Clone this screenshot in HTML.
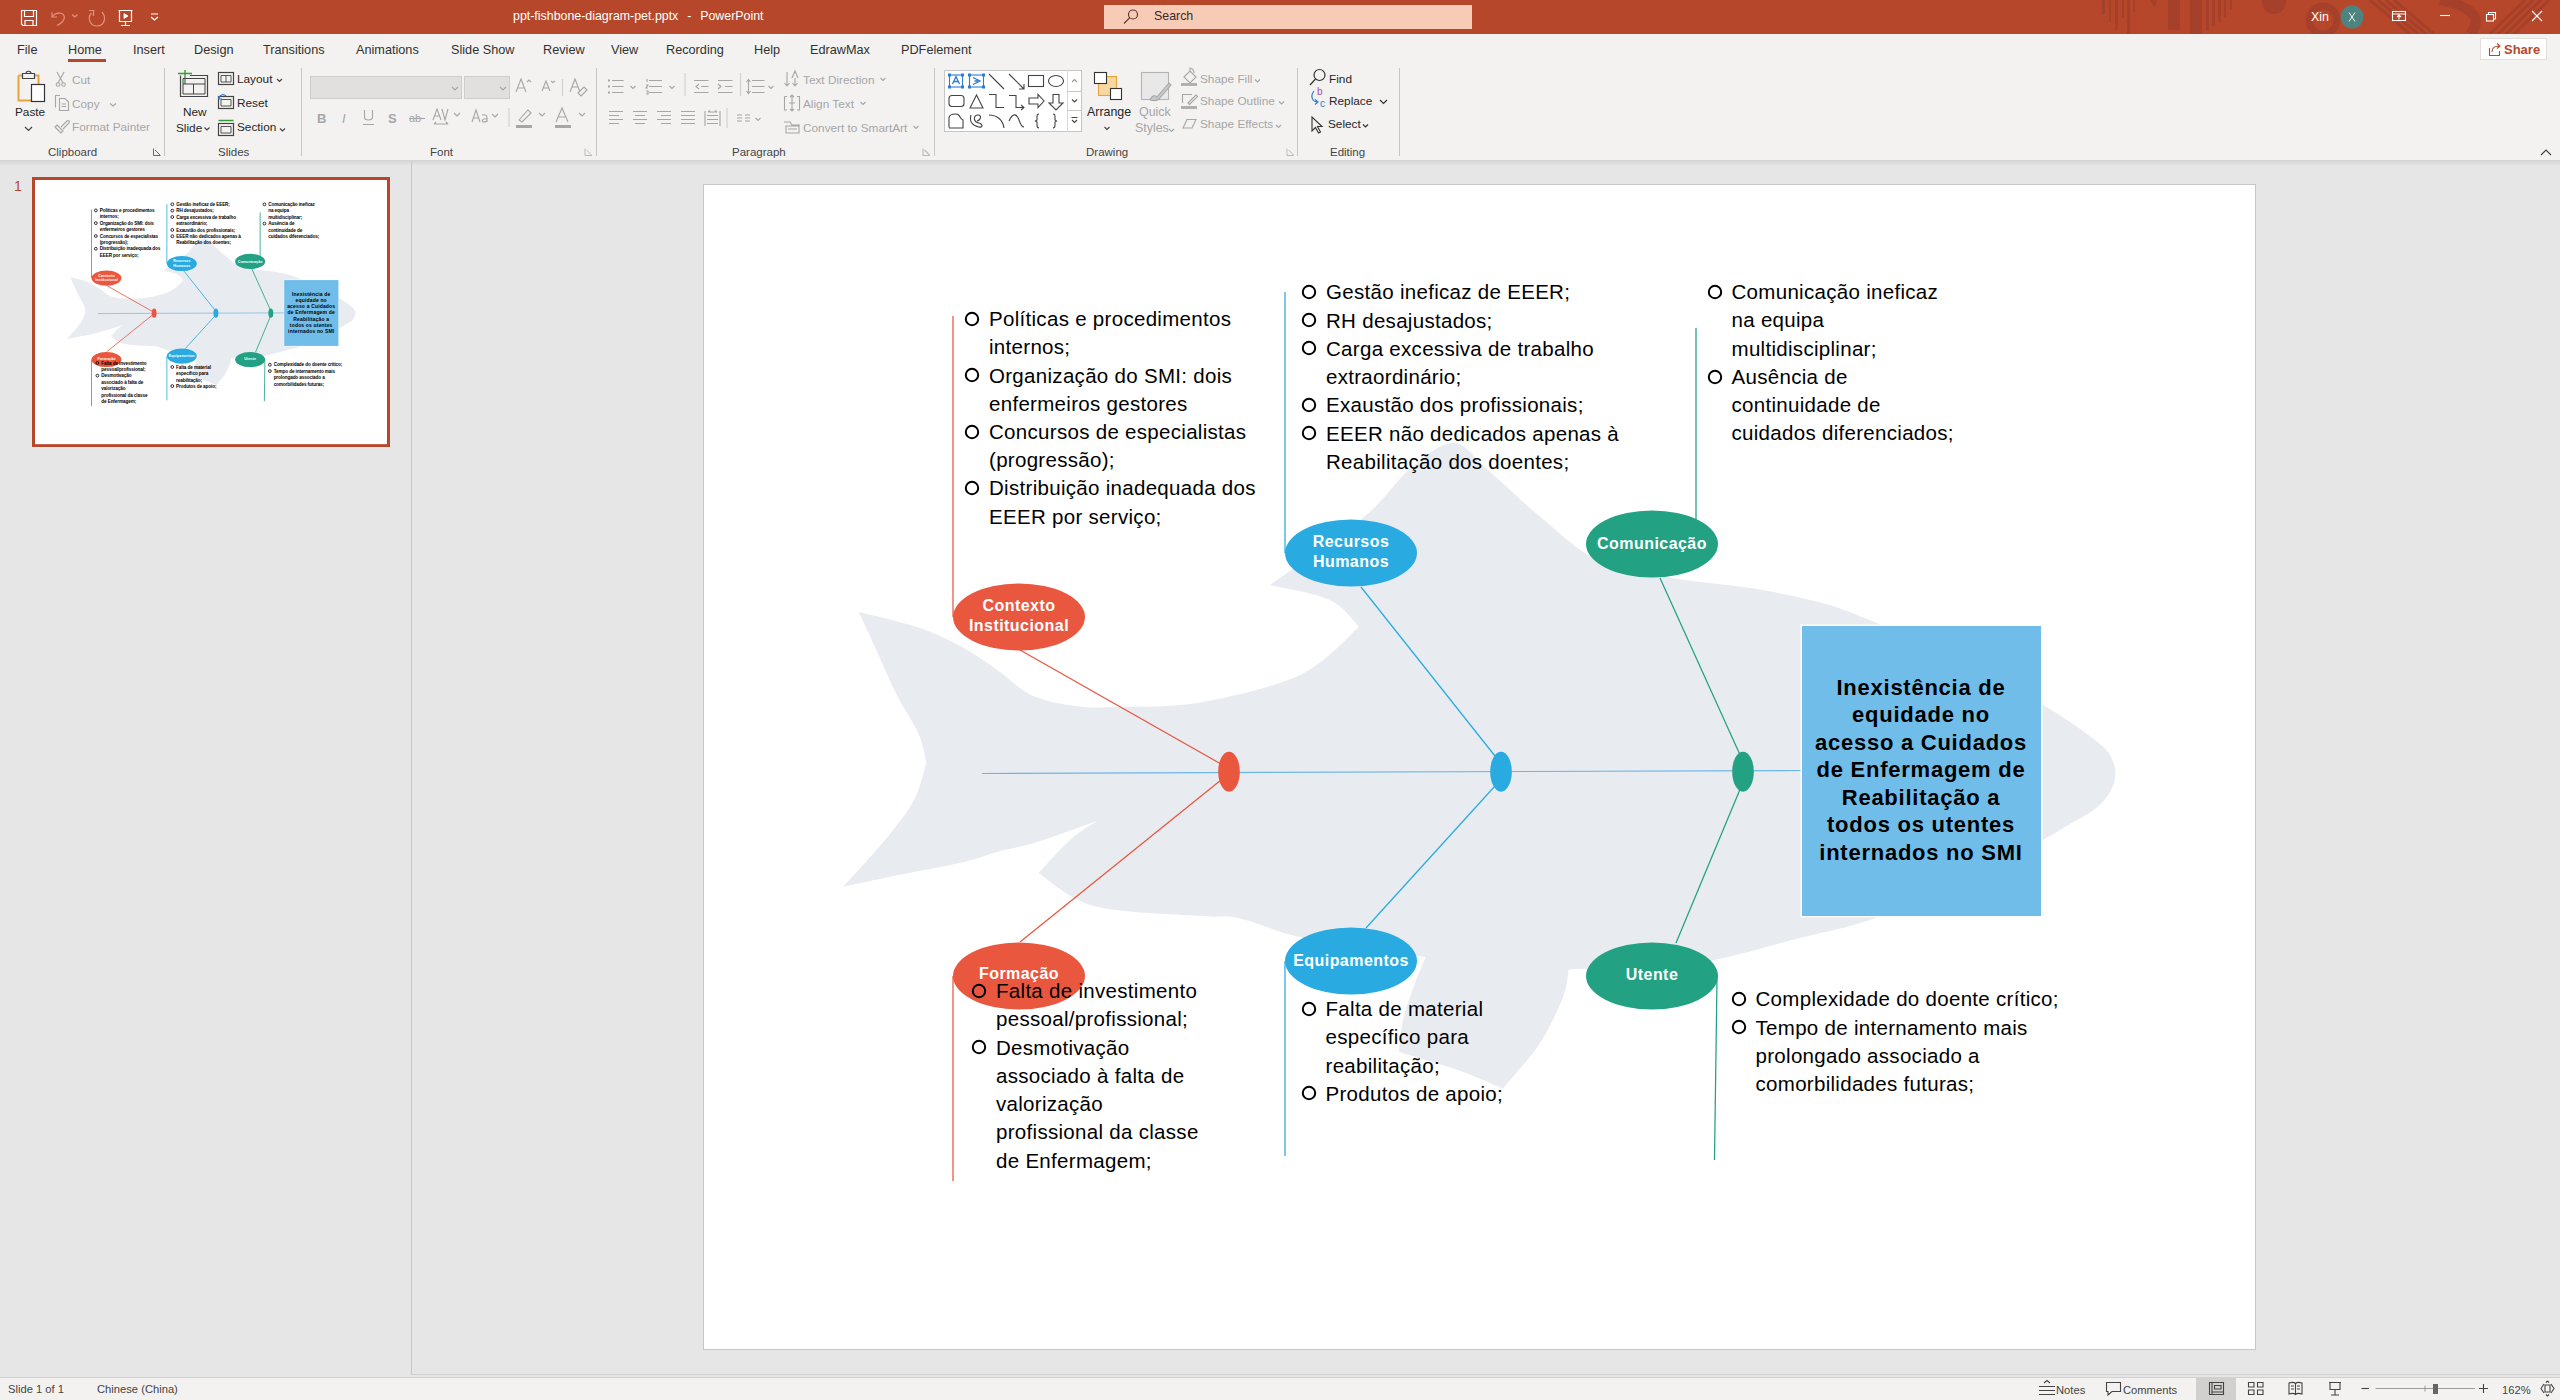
<!DOCTYPE html>
<html><head><meta charset="utf-8"><title>PowerPoint</title>
<style>
*{margin:0;padding:0;box-sizing:border-box}
html,body{width:2560px;height:1400px;overflow:hidden;background:#e6e6e6;font-family:"Liberation Sans",sans-serif;color:#262626}
.abs{position:absolute}
#titlebar{position:absolute;left:0;top:0;width:2560px;height:34px;background:#b7472a;overflow:hidden}
#tabs{position:absolute;left:0;top:34px;width:2560px;height:30px;background:#f3f2f1}
#ribbon{position:absolute;left:0;top:64px;width:2560px;height:96px;background:#f3f2f1}
#ribshadow{position:absolute;left:0;top:160px;width:2560px;height:6px;background:linear-gradient(#d4d4d4,#e6e6e6)}
.tab{position:absolute;top:41px;font-size:12.7px;color:#323130;white-space:nowrap;line-height:16px}
.t12{position:absolute;font-size:11.8px;color:#262626;white-space:nowrap;line-height:14px}
.dis{color:#a6a6a6}
.glab{position:absolute;top:145px;font-size:11.5px;color:#444;white-space:nowrap;line-height:14px}
.sep{position:absolute;top:68px;width:1px;height:88px;background:#c8c6c4}
.sep2{position:absolute;width:1px;background:#d0d0d0}
svg{position:absolute;overflow:visible}
.st{font-size:11.2px;color:#444;white-space:nowrap;position:absolute;line-height:14px}
.sl{position:absolute;white-space:nowrap;font-family:"Liberation Sans",sans-serif}
.slide{position:absolute;width:1551px;height:1164px;background:#fff;overflow:hidden}
</style></head><body>
<div id="titlebar">
<svg width="2560" height="34" style="left:0;top:0">
 <g fill="#a3402a" opacity="0.85">
  <rect x="2102" y="0" width="3" height="14"/><rect x="2109" y="0" width="2" height="22"/><rect x="2115" y="0" width="3" height="30"/><rect x="2122" y="0" width="2" height="18"/><rect x="2127" y="0" width="3" height="34"/><rect x="2133" y="0" width="2" height="12"/>
  <polygon points="2150,0 2157,0 2155,8"/>
  <rect x="2168" y="0" width="12" height="30"/><rect x="2190" y="0" width="12" height="34"/><rect x="2206" y="0" width="3" height="30"/><rect x="2212" y="0" width="3" height="26"/><rect x="2218" y="0" width="3" height="22"/><rect x="2224" y="0" width="2" height="18"/><rect x="2230" y="0" width="2" height="10"/>
  <circle cx="2274" cy="2" r="12"/>
 </g>
 <g fill="none" stroke="#a3402a" opacity="0.85">
  <circle cx="2323" cy="20" r="14" stroke-width="7"/>
  <path d="M2370 0 L2410 34 M2378 0 L2418 34 M2386 0 L2426 34 M2394 0 L2434 34" stroke-width="3"/>
  <path d="M2440 0 Q2490 10 2470 34" stroke-width="10"/>
  <path d="M2490 34 L2525 0 M2498 34 L2533 0 M2506 34 L2541 0 M2514 34 L2549 0" stroke-width="3"/>
 </g>
 <!-- save -->
 <g fill="none" stroke="#fff" stroke-width="1.2">
  <path d="M21.5 10.5 H36.5 V25.5 H23 L21.5 24 Z"/>
  <path d="M24.5 10.5 V16.5 H33.5 V10.5"/>
  <path d="M25 25.5 V20.5 H33 V25.5"/>
 </g>
 <!-- undo -->
 <g fill="none" stroke="#e0937f" stroke-width="1.2">
  <path d="M52 12 V17 H57"/><path d="M52 17 C56 11 66 12 64 19 C63 22 60 24 57 25.5"/>
  <path d="M72 14.5 L74.8 17 L77.5 14.5"/>
  <path d="M89 10.5 H94.5 M93.5 10.5 V16"/><path d="M91.5 13 C87 18 90 26 97 26 C104 26 107 18 102 12"/>
 </g>
 <!-- present -->
 <g fill="none" stroke="#fff" stroke-width="1.2">
  <path d="M118.5 10.5 H132.5 M119.5 10.5 V21.5 H131.5 V10.5 M125.5 21.5 V25.5 M121 25.5 H130"/>
  <path d="M124 13.5 L128 16 L124 18.5 Z" fill="#fff" stroke-width="0.8"/>
  <path d="M151 14 H158 M151 17 L154.5 20 L158 17"/>
 </g>
 <rect x="1104" y="5" width="368" height="24" fill="#f8cbb7"/>
 <g fill="none" stroke="#5a3a30" stroke-width="1.2"><circle cx="1133" cy="14.5" r="4.5"/><path d="M1129.8 17.7 L1124 23.5"/></g>
 <!-- right -->
 <circle cx="2352" cy="17" r="11.5" fill="#4e8380"/>
 <g fill="none" stroke="#fff" stroke-width="1.1">
  <path d="M2349 12.5 L2355 21.5 M2355 12.5 L2349 21.5" stroke-width="0.9"/>
  <rect x="2392.5" y="11.5" width="13" height="9"/><path d="M2392.5 14 H2405.5 M2399 19.5 V15.5 M2397 17 L2399 15 L2401 17"/>
  <path d="M2440 15.5 H2450"/>
  <rect x="2486.5" y="14.5" width="7" height="6.5"/><path d="M2488.5 14.5 V12.5 H2495.5 V19 H2493.5"/>
  <path d="M2532 11 L2542 21 M2542 11 L2532 21"/>
 </g>
</svg>
<div class="abs" style="left:513px;top:9px;font-size:12.4px;color:#fff;white-space:nowrap;line-height:15px;word-spacing:1px">ppt-fishbone-diagram-pet.pptx&nbsp; - &nbsp;PowerPoint</div>
<div class="abs" style="left:1154px;top:9px;font-size:12.4px;color:#3b2a25;line-height:15px">Search</div>
<div class="abs" style="left:2311px;top:10px;font-size:12.4px;color:#fff;line-height:15px">Xin</div>
</div>
<div id="tabs">
<div class="tab" style="left:17px;top:8px">File</div>
<div class="tab" style="left:68px;top:8px">Home</div>
<div class="abs" style="left:68px;top:25px;width:38px;height:3px;background:#b7472a"></div>
<div class="tab" style="left:133px;top:8px">Insert</div>
<div class="tab" style="left:194px;top:8px">Design</div>
<div class="tab" style="left:263px;top:8px">Transitions</div>
<div class="tab" style="left:356px;top:8px">Animations</div>
<div class="tab" style="left:451px;top:8px">Slide Show</div>
<div class="tab" style="left:543px;top:8px">Review</div>
<div class="tab" style="left:611px;top:8px">View</div>
<div class="tab" style="left:666px;top:8px">Recording</div>
<div class="tab" style="left:754px;top:8px">Help</div>
<div class="tab" style="left:810px;top:8px">EdrawMax</div>
<div class="tab" style="left:901px;top:8px">PDFelement</div>
<div class="abs" style="left:2480px;top:4px;width:67px;height:22px;background:#fff;border:1px solid #e1dfdd"></div>
<svg width="20" height="20" style="left:2486px;top:5px"><g fill="none" stroke="#b7472a" stroke-width="1.1"><path d="M3.5 9 V16.5 H13.5 V12"/><path d="M6 13 C6 9 9 7 13 7 M11 4.5 L14 7 L11 9.5"/></g></svg>
<div class="abs" style="left:2504px;top:7.5px;font-size:13px;font-weight:600;color:#b7472a;line-height:16px">Share</div>
</div>
<div id="ribbon"></div>
<div id="ribshadow"></div>
<!-- separators -->
<div class="sep" style="left:164px"></div>
<div class="sep" style="left:301px"></div>
<div class="sep" style="left:596px"></div>
<div class="sep" style="left:934px"></div>
<div class="sep" style="left:1297px"></div>
<div class="sep" style="left:1399px"></div>
<!-- Clipboard -->
<svg width="300" height="100" style="left:0;top:60px">
 <g fill="none" stroke-width="1.2">
  <path d="M18.5 15.5 H22 M34 15.5 H38.5 V24" stroke="#e8a33d" stroke-width="2"/>
  <path d="M18.5 15.5 V40.5 H31" stroke="#e8a33d" stroke-width="2"/>
  <path d="M22.5 13.5 H34.5 V18.5 H22.5 Z M26 13.5 C26 10.5 31 10.5 31 13.5" stroke="#444"/>
  <rect x="31.5" y="24.5" width="13" height="17" fill="#fff" stroke="#333"/>
  <path d="M25 67 L28.5 70.5 L32 67" stroke="#444"/>
 </g>
 <g fill="none" stroke="#a6a6a6" stroke-width="1.1">
  <path d="M57 12 L63 23 M64 12 L58 23"/><circle cx="58" cy="24.5" r="1.8"/><circle cx="63.5" cy="24.5" r="1.8"/>
  <path d="M55.5 47.5 V35.5 H60 M59.5 49.5 V38.5 H65 L68.5 42 V50.5 H59.5 Z M61.5 44 H66 M61.5 46.5 H66"/>
  <path d="M110 43.5 L113 46 L116 43.5"/>
  <path d="M55 67 L60 72 M57 65 L63 71 L61 73 L55 67 Z M61 67 L67 61 C69 60 70 61 69 63 L63 69"/>
 </g>
 <g fill="none" stroke="#444" stroke-width="1.2">
  <path d="M178 13.5 H192 M185 10 V24" stroke="#3a9a3a" stroke-width="1.4"/>
  <path d="M180.5 15.5 V36.5 H207.5 V15.5 H190"/><path d="M183 18.5 H205 V34 H183 Z M193.5 24 V34 M183 24 H205" stroke-width="1"/>
  <path d="M204.5 67.5 L207 70 L209.5 67.5"/>
  <rect x="218.5" y="12.5" width="15" height="12"/><path d="M221 15.5 H231 V22 H221 Z M226 15.5 V22" stroke-width="0.9"/>
  <path d="M277 19 L279.5 21.5 L282 19"/>
  <rect x="218.5" y="36.5" width="15" height="12"/><path d="M221 39.5 H231 V46 H221 Z" stroke-width="0.9"/>
  <path d="M219 38 C220 34 224 34 226 36 M219 36 V39 H222" stroke="#2b7cd3"/>
  <path d="M218.5 60.5 H233.5" stroke="#3a9a3a" stroke-width="1.5"/><rect x="218.5" y="63.5" width="15" height="12"/><path d="M221 66.5 H231 V73 H221 Z" stroke-width="0.9"/>
  <path d="M280 68.5 L282.5 71 L285 68.5"/>
  <path d="M153.5 88.5 V95.5 H160.5 M155 90 L160 95" stroke="#666" stroke-width="1"/>
 </g>
</svg>
<div class="t12" style="left:15px;top:105px;font-size:11.8px">Paste</div>
<div class="t12 dis" style="left:72px;top:73px">Cut</div>
<div class="t12 dis" style="left:72px;top:97px">Copy</div>
<div class="t12 dis" style="left:72px;top:120px">Format Painter</div>
<div class="glab" style="left:48px">Clipboard</div>
<div class="t12" style="left:183px;top:105px;font-size:11.8px">New</div>
<div class="t12" style="left:176px;top:121px;font-size:11.8px">Slide</div>
<div class="t12" style="left:237px;top:72px">Layout</div>
<div class="t12" style="left:237px;top:96px">Reset</div>
<div class="t12" style="left:237px;top:120px">Section</div>
<div class="glab" style="left:218px">Slides</div>
<!-- Font -->
<div class="abs" style="left:310px;top:76px;width:152px;height:23px;background:#e1e0df;border:1px solid #cfcdcb"></div>
<div class="abs" style="left:464px;top:76px;width:46px;height:23px;background:#e1e0df;border:1px solid #cfcdcb"></div>
<svg width="700" height="100" style="left:300px;top:60px">
 <g fill="none" stroke="#a6a6a6" stroke-width="1.1">
  <path d="M152 27 L155 30 L158 27 M200 27 L203 30 L206 27"/>
  <path d="M216 32 L221 19 L226 32 M218 28 H224 M227 22 L229 20 L231 22"/>
  <path d="M242 31 L246 21 L250 31 M243.5 28 H248.5 M251 21 L253 22.5 L255 21"/>
  <path d="M262.5 19 V36" stroke="#d0d0d0"/>
  <path d="M270 32 L275 19 L280 32 M272 27 H278 M278 33 L284 27 L287 30 L281 36 Z"/>
  <path d="M154 53 L157 56 L160 53 M192 54 L195 57 L198 54 M239 53 L242 56 L245 53 M279 53 L282 56 L285 53"/>
  <path d="M209 48 V67" stroke="#d0d0d0"/>
  <path d="M64.5 50 V57 C64.5 61 72.5 61 72.5 57 V50 M63 64.5 H74"/>
  <path d="M109 58.5 H125"/>
  <path d="M133 60 L137 49 L141 60 M134.5 56 H139.5 M142 49 L145 60 L148 49 M134 64 H148 M134 64 L136 62 M148 64 L146 62"/>
  <path d="M172 62 L176 50 L180 62 M173.5 58 H178.5 M182 55 C186 54 187 56 187 58 V62 M187 59 C182 58 181 62 184 62 C186 62 187 61 187 60"/>
  <path d="M219 60 L228 50 L231 53 L222 62 Z"/>
  <path d="M256 62 L262 48 L268 62 M258 57 H266"/>
 </g>
 <g fill="#a6a6a6">
  <rect x="216" y="65" width="16" height="3"/><rect x="255" y="65" width="16" height="3"/>
 </g>
 <g fill="#a6a6a6" font-family="Liberation Sans" >
  <text x="17" y="63" font-size="13" font-weight="700">B</text>
  <text x="42" y="63" font-size="13" font-style="italic">I</text>
  <text x="88" y="63" font-size="13" font-weight="700">S</text>
  <text x="109" y="62" font-size="11">ab</text>
 </g>
 <path d="M285 88.5 V95.5 H292 M286.5 90 L291.5 95" stroke="#bbb" fill="none"/>
</svg>
<div class="glab" style="left:430px">Font</div>
<!-- Paragraph -->
<svg width="340" height="100" style="left:595px;top:60px">
 <g fill="none" stroke="#a6a6a6" stroke-width="1.1">
  <path d="M17 20.5 H28.5 M17 26.5 H28.5 M17 32.5 H28.5"/>
  <rect x="13" y="19.5" width="2" height="2" fill="#a6a6a6" stroke="none"/><rect x="13" y="25.5" width="2" height="2" fill="#a6a6a6" stroke="none"/><rect x="13" y="31.5" width="2" height="2" fill="#a6a6a6" stroke="none"/>
  <path d="M35.5 26 L38 28.5 L40.5 26 M74.5 26 L77 28.5 L79.5 26 M173.5 26 L176 28.5 L178.5 26 M160.5 58 L163 60.5 L165.5 58"/>
  <path d="M54 20.5 H67 M54 26.5 H67 M54 32.5 H67 M52 19 V22 M51 25 H53 L51 28 H53 M51 31 H53 V34 H51"/>
  <path d="M90 30.5" /><path d="M685 0"/>
  <path d="M99 20.5 H113.5 M106 26.5 H113.5 M99 32.5 H113.5 M104 24 L101 26.5 L104 29"/>
  <path d="M123 20.5 H137.5 M130 26.5 H137.5 M123 32.5 H137.5 M123 24 L126 26.5 L123 29"/>
  <path d="M90 13 V36 M145.5 13 V36" stroke="#d0d0d0"/>
  <path d="M157 20.5 H169.5 M157 26.5 H169.5 M157 32.5 H169.5 M153.5 20 V33 M151.5 22 L153.5 19.5 L155.5 22 M151.5 31 L153.5 33.5 L155.5 31"/>
  <path d="M192 12 V26 M189.5 23 L192 26 L194.5 23 M200 18 V26 M197.5 23 L200 26 L202.5 23 M197 18 L200 11 L203 18"/>
  <path d="M189.5 36.5 H192 M189.5 36.5 V50 H192 M202 36.5 H204.5 V50 H202 M197 35 V51 M195 37 L197 35 L199 37 M195 49 L197 51 L199 49 M194 43 H200"/>
  <path d="M189 62 L195 62 L197 65 H205 M191 66 H204 V73 H191 Z M193 69 H202" />
  <path d="M14 51.5 H28 M14 55.5 H24 M14 59.5 H28 M14 63.5 H24"/>
  <path d="M38 51.5 H52 M40 55.5 H50 M38 59.5 H52 M40 63.5 H50"/>
  <path d="M62 51.5 H76 M66 55.5 H76 M62 59.5 H76 M66 63.5 H76"/>
  <path d="M86 51.5 H100 M86 55.5 H100 M86 59.5 H100 M86 63.5 H100"/>
  <path d="M110 51 V66 M125 51 V66 M112 55.5 H123 M112 59.5 H123 M112 63.5 H123 M113 52 H122 M113 52 L115 50.5 M122 52 L120 50.5"/>
  <path d="M132 48 V68" stroke="#d0d0d0"/>
  <path d="M142 55 H147 M142 58 H147 M142 61 H147 M150 55 H155 M150 58 H155 M150 61 H155"/>
  <path d="M328 88.5 V95.5 H335 M329.5 90 L334.5 95" stroke="#bbb"/>
 </g>
</svg>
<div class="t12 dis" style="left:803px;top:73px">Text Direction</div>
<div class="t12 dis" style="left:803px;top:97px">Align Text</div>
<div class="t12 dis" style="left:803px;top:121px">Convert to SmartArt</div>
<svg width="100" height="100" style="left:870px;top:60px"><g fill="none" stroke="#a6a6a6" stroke-width="1.1"><path d="M10.5 18 L13 20.5 L15.5 18 M-9.5 42 L-7 44.5 L-4.5 42 M43.5 66 L46 68.5 L48.5 66"/></g></svg>
<div class="glab" style="left:732px">Paragraph</div>
<!-- Drawing -->
<div class="abs" style="left:944px;top:70px;width:138px;height:62px;background:#fff;border:1px solid #c6c6c6"></div>
<div class="abs" style="left:1067px;top:70px;width:1px;height:62px;background:#d6d6d6"></div>
<div class="abs" style="left:1067px;top:91px;width:15px;height:1px;background:#c6c6c6"></div>
<div class="abs" style="left:1067px;top:110px;width:15px;height:1px;background:#c6c6c6"></div>
<svg width="500" height="100" style="left:935px;top:60px">
 <g fill="none" stroke="#444" stroke-width="1.1">
  <rect x="14.5" y="15" width="13" height="12" stroke="#2b7cd3"/>
  <path d="M17.5 24 L21 16.5 L24.5 24 M18.5 21.5 H23.5" stroke="#2b7cd3" stroke-width="1.3"/>
  <rect x="34.5" y="15" width="14" height="12" stroke="#2b7cd3"/>
  <path d="M38 17.5 L45 21 L38 24.5 M39.5 21 H43" stroke="#2b7cd3" stroke-width="1.3"/>
  <path d="M54 14 L69 29"/>
  <path d="M74 14 L89 29 M84 29 H89 V24"/>
  <rect x="93.5" y="15.5" width="15" height="11"/>
  <ellipse cx="121" cy="21" rx="7.5" ry="5.5"/>
  <rect x="14" y="35.5" width="15" height="11" rx="3"/>
  <path d="M35 48 L41.5 35 L48 48 Z"/>
  <path d="M54 34.5 H61 V47.5 H69"/>
  <path d="M74 35.5 H81 V47.5 H89 M86 45 L89 47.5 L86 50"/>
  <path d="M94 38 H103 V34.5 L109 41 L103 47.5 V44 H94 Z"/>
  <path d="M118 34.5 H124 V43 H128 L121 50 L114 43 H118 Z"/>
  <path d="M14 67.5 V58 C14 55 17 54 21 54 C26 54 24 59 28 60 V68 H14"/>
  <path d="M36 55 C34 62 38 66 44 67 C48 68 48 64 44 63 C38 62 38 55 43 55 C47 55 46 60 42 61"/>
  <path d="M54 55 C62 55 68 60 69 68"/>
  <path d="M74 61 C78 52 82 54 84 60 C86 66 88 67 89 67"/>
  <path d="M104 54 C102 54 102 55 102 58 V60 L100.5 61 L102 62 V65 C102 67 102 68 104 68"/>
  <path d="M118 54 C120 54 120 55 120 58 V60 L121.5 61 L120 62 V65 C120 67 120 68 118 68"/>
  <path d="M137 22 L139.5 19.5 L142 22" stroke="#999"/>
  <path d="M137 39.5 L139.5 42 L142 39.5" stroke="#444"/>
  <path d="M136.5 57.5 H142.5 M137 60 L139.5 62.5 L142 60"/>
 </g>
 <g stroke="none" fill="#2b7cd3">
  <rect x="13" y="13.5" width="3" height="3"/><rect x="26" y="13.5" width="3" height="3"/><rect x="13" y="25.5" width="3" height="3"/><rect x="26" y="25.5" width="3" height="3"/>
  <rect x="33" y="13.5" width="3" height="3"/><rect x="47" y="13.5" width="3" height="3"/><rect x="33" y="25.5" width="3" height="3"/><rect x="47" y="25.5" width="3" height="3"/>
 </g>
 <g stroke-width="1.1">
  <rect x="163.5" y="16.5" width="18" height="19" fill="#f8d7a0" stroke="#e8a33d"/>
  <rect x="159.5" y="12.5" width="12" height="11" fill="#fff" stroke="#333"/>
  <rect x="175.5" y="28.5" width="11" height="11" fill="#fff" stroke="#333"/>
  <path d="M169.5 67 L172 69.5 L174.5 67" fill="none" stroke="#444"/>
  <rect x="206.5" y="12.5" width="27" height="27" fill="#e8e8e8" stroke="#b4b4b4"/>
  <path d="M215 40 C217 35 220 35 222 37 L234 23 L236 25 L224 39 C222 41 219 41 215 40" fill="#c8c8c8" stroke="#a6a6a6"/>
  <path d="M234 69 L236.5 71.5 L239 69" fill="none" stroke="#a6a6a6"/>
 </g>
 <path d="M352 88.5 V95.5 H359 M353.5 90 L358.5 95" stroke="#bbb" fill="none"/>
</svg>
<div class="t12" style="left:1087px;top:105px;font-size:12.4px">Arrange</div>
<div class="t12 dis" style="left:1139px;top:105px;font-size:12.4px">Quick</div>
<div class="t12 dis" style="left:1135px;top:121px;font-size:12.4px">Styles</div>
<svg width="120" height="80" style="left:1175px;top:60px">
 <g fill="none" stroke="#a6a6a6" stroke-width="1.1">
  <path d="M9 17 L15 11 L21 17 L15 23 Z M15 11 V8 C17 8 19 10 19 13"/>
  <path d="M7.5 43 V34.5 H17 M13 43 L21 35 L22.5 36.5 L14.5 44.5 Z"/>
  <path d="M8 68 L12 59.5 H21 L17 68 Z M12 59.5 L10 64"/>
  <path d="M80 19.5 L82.5 22 L85 19.5 M104 41.5 L106.5 44 L109 41.5 M101 65 L103.5 67.5 L106 65"/>
 </g>
 <rect x="6" y="23" width="16" height="3" fill="#b0b0b0"/>
 <rect x="6" y="46" width="16" height="3" fill="#b0b0b0"/>
</svg>
<div class="t12 dis" style="left:1200px;top:72px">Shape Fill</div>
<div class="t12 dis" style="left:1200px;top:94px">Shape Outline</div>
<div class="t12 dis" style="left:1200px;top:117px">Shape Effects</div>
<div class="glab" style="left:1086px">Drawing</div>
<!-- Editing -->
<svg width="100" height="80" style="left:1300px;top:60px">
 <g fill="none" stroke="#333" stroke-width="1.2">
  <circle cx="19.5" cy="15" r="5.5"/><path d="M15.5 19 L10 25"/>
  <path d="M14 31 C10 36 12 42 18 42 M15 39.5 L18 42 L15 44.5" stroke="#2b7cd3"/>
  <path d="M12 57 V71 L15.5 67.5 L18.5 73 L20.5 72 L17.5 66.5 H22 Z" stroke-width="1.1"/>
  <path d="M80 40 L83.5 43.5 L87 40 M63 64.5 L65.5 67 L68 64.5"/>
 </g>
 <text x="17" y="35" font-family="Liberation Sans" font-size="10" fill="#9b4fb0">b</text>
 <text x="20" y="47" font-family="Liberation Sans" font-size="10" fill="#2b7cd3">c</text>
</svg>
<div class="t12" style="left:1329px;top:72px">Find</div>
<div class="t12" style="left:1329px;top:94px">Replace</div>
<div class="t12" style="left:1328px;top:117px">Select</div>
<div class="glab" style="left:1330px">Editing</div>
<svg width="16" height="10" style="left:2539px;top:148px"><path d="M2 7 L7 2 L12 7" fill="none" stroke="#444" stroke-width="1.2"/></svg>

<div class="abs" style="left:411px;top:161px;width:1px;height:1214px;background:#c8c6c4"></div>
<div class="abs" style="left:412px;top:1374px;width:2148px;height:1px;background:#d2d0ce"></div>
<div class="abs" style="left:14px;top:178px;font-size:14px;color:#b7472a;line-height:16px">1</div>
<div class="abs" style="left:32px;top:177px;width:358px;height:270px;border:3px solid #b7472a;background:#fff"></div>
<div class="slide" style="left:35px;top:180px;transform:scale(0.22695);transform-origin:0 0"><svg width="1551" height="1164" style="left:0;top:0"><path d="M154.8,427.0 C164.8,429.6 197.3,436.7 214.6,442.6 C231.9,448.5 245.2,455.2 258.8,462.6 C272.4,470.0 284.6,479.1 296.0,487.0 C307.4,494.9 314.5,504.3 327.0,510.0 C339.5,515.7 356.2,519.0 371.0,521.0 C385.8,523.0 395.2,522.6 416.0,522.0 C436.8,521.4 466.0,522.8 496.0,517.5 C526.0,512.2 569.5,502.6 596.0,490.0 C622.5,477.4 645.2,450.0 655.0,442.0 C650.2,437.5 640.8,422.0 626.0,415.0 C611.2,408.0 576.0,402.5 566.0,400.0 C581.7,388.7 636.5,351.5 660.0,332.0 C683.5,312.5 692.0,295.3 707.0,283.0 C722.0,270.7 737.0,257.5 750.0,258.0 C763.0,258.5 770.0,273.2 785.0,286.0 C800.0,298.8 821.8,320.2 840.0,335.0 C858.2,349.8 872.5,365.4 894.0,375.0 C915.5,384.6 942.9,388.1 968.9,392.9 C994.9,397.7 1024.5,399.2 1050.0,403.6 C1075.5,408.0 1100.2,412.8 1121.7,419.0 C1143.2,425.2 1156.6,431.4 1179.0,440.7 C1201.4,450.0 1229.7,462.0 1256.0,475.0 C1282.3,488.0 1319.2,509.0 1337.0,519.0 C1354.8,529.0 1354.0,529.0 1363.0,535.0 C1372.0,541.0 1383.8,549.2 1391.0,555.0 C1398.2,560.8 1402.6,564.4 1406.0,570.0 C1409.4,575.6 1411.4,582.5 1411.4,588.7 C1411.4,594.9 1409.4,601.1 1406.0,607.0 C1402.6,612.9 1398.2,618.4 1391.0,624.0 C1383.8,629.6 1372.0,635.4 1363.0,640.7 C1354.0,646.0 1354.8,646.1 1337.0,656.0 C1319.2,665.9 1284.5,686.8 1256.0,700.0 C1227.5,713.2 1192.7,726.2 1166.0,735.0 C1139.3,743.8 1125.7,745.7 1096.0,753.0 C1066.3,760.3 1025.5,773.8 988.0,779.0 C950.5,784.2 890.5,783.2 871.0,784.0 L864.6,784.7 C863.7,789.2 863.8,799.8 859.0,812.0 C854.2,824.2 846.0,842.7 836.0,858.0 C826.0,873.3 805.2,896.0 799.0,903.6 C793.7,901.3 776.1,893.6 767.0,890.0 C757.9,886.4 756.6,885.8 744.6,882.0 C732.6,878.2 703.3,869.5 695.0,867.0 C695.7,861.7 696.5,846.0 699.0,835.0 C701.5,824.0 706.2,811.2 710.0,800.7 C713.8,790.2 719.8,776.8 721.7,772.0 C701.7,768.9 632.5,759.8 601.5,753.4 C570.5,747.0 553.6,737.2 536.0,733.5 C518.4,729.8 520.3,733.1 496.0,731.0 C471.7,728.9 416.9,728.2 390.0,721.0 C363.1,713.8 343.8,693.5 334.6,688.0 C339.8,682.5 356.3,663.7 366.0,655.0 C375.7,646.3 388.5,639.2 393.0,636.0 C382.5,639.7 346.2,653.0 330.0,658.0 C313.8,663.0 307.9,662.8 296.0,666.0 C284.1,669.2 276.1,673.2 258.8,677.3 C241.5,681.4 212.3,686.5 192.4,690.6 C172.5,694.7 148.1,699.9 139.3,701.7 C146.2,693.9 169.2,669.5 181.0,655.0 C192.8,640.5 203.1,627.9 210.0,615.0 C216.9,602.1 220.2,583.9 222.3,577.7 C221.0,572.9 219.6,560.5 214.6,549.0 C209.6,537.5 199.8,523.8 192.4,509.0 C185.0,494.2 176.3,473.7 170.0,460.0 C163.7,446.3 157.3,432.5 154.8,427.0 Z" fill="#e8ebf0"/><path d="M278,588.5 L1098,585.5" stroke="#6cb6e6" stroke-width="3" fill="none"/><path d="M249.0,131.0 L249.0,432.0" stroke="#e9573f" stroke-width="3.6" fill="none"/><path d="M316.0,465.0 L517.0,579.0" stroke="#e9573f" stroke-width="3.6" fill="none"/><path d="M517.0,595.0 L316.0,757.0" stroke="#e9573f" stroke-width="3.6" fill="none"/><path d="M249.0,791.0 L249.0,996.0" stroke="#e9573f" stroke-width="3.6" fill="none"/><path d="M581.0,107.0 L581.0,368.0" stroke="#29abe2" stroke-width="3.6" fill="none"/><path d="M657.0,402.0 L791.0,571.0" stroke="#29abe2" stroke-width="3.6" fill="none"/><path d="M791.0,601.0 L662.0,743.0" stroke="#29abe2" stroke-width="3.6" fill="none"/><path d="M581.0,776.0 L581.0,971.0" stroke="#29abe2" stroke-width="3.6" fill="none"/><path d="M992.0,143.0 L992.0,337.0" stroke="#23a183" stroke-width="3.6" fill="none"/><path d="M956.0,393.0 L1037.0,572.0" stroke="#23a183" stroke-width="3.6" fill="none"/><path d="M1037.0,602.0 L972.0,758.0" stroke="#23a183" stroke-width="3.6" fill="none"/><path d="M1013.0,794.0 L1010.5,975.0" stroke="#23a183" stroke-width="3.6" fill="none"/><ellipse cx="525" cy="586.7" rx="10.8" ry="20" fill="#e9573f"/><ellipse cx="797" cy="586.7" rx="10.8" ry="20" fill="#29abe2"/><ellipse cx="1039" cy="586.7" rx="10.8" ry="20" fill="#23a183"/><ellipse cx="315" cy="432" rx="66" ry="33.5" fill="#e9573f"/><ellipse cx="647" cy="368" rx="66" ry="33.5" fill="#29abe2"/><ellipse cx="948" cy="359" rx="66" ry="33.5" fill="#23a183"/><ellipse cx="315" cy="791" rx="66" ry="33.5" fill="#e9573f"/><ellipse cx="647" cy="776" rx="66" ry="33.5" fill="#29abe2"/><ellipse cx="948" cy="791" rx="66" ry="33.5" fill="#23a183"/><rect x="1096.5" y="439.5" width="242" height="293" fill="#fff"/><rect x="1098" y="441" width="239" height="290" fill="#71bdea"/></svg><div class="sl" style="left:115.0px;width:400px;text-align:center;top:410.4px;font-size:16px;line-height:22px;font-weight:700;color:#fff;letter-spacing:0.45px">Contexto</div><div class="sl" style="left:115.0px;width:400px;text-align:center;top:430.1px;font-size:16px;line-height:22px;font-weight:700;color:#fff;letter-spacing:0.45px">Institucional</div><div class="sl" style="left:447.0px;width:400px;text-align:center;top:346.3px;font-size:16px;line-height:22px;font-weight:700;color:#fff;letter-spacing:0.45px">Recursos</div><div class="sl" style="left:447.0px;width:400px;text-align:center;top:366.2px;font-size:16px;line-height:22px;font-weight:700;color:#fff;letter-spacing:0.45px">Humanos</div><div class="sl" style="left:748.0px;width:400px;text-align:center;top:347.8px;font-size:16px;line-height:22px;font-weight:700;color:#fff;letter-spacing:0.45px">Comunicação</div><div class="sl" style="left:115.0px;width:400px;text-align:center;top:778.3px;font-size:16px;line-height:22px;font-weight:700;color:#fff;letter-spacing:0.45px">Formação</div><div class="sl" style="left:447.0px;width:400px;text-align:center;top:765.0px;font-size:16px;line-height:22px;font-weight:700;color:#fff;letter-spacing:0.45px">Equipamentos</div><div class="sl" style="left:748.0px;width:400px;text-align:center;top:779.1px;font-size:16px;line-height:22px;font-weight:700;color:#fff;letter-spacing:0.45px">Utente</div><svg width="16" height="16" style="left:260.0px;top:125.8px"><circle cx="8" cy="8" r="6.2" fill="none" stroke="#000" stroke-width="3.5"/></svg><div class="sl" style="left:285.0px;top:119.2px;font-size:20.5px;line-height:29px;font-weight:700;color:#000;letter-spacing:-0.5px">Políticas e procedimentos</div><div class="sl" style="left:285.0px;top:147.4px;font-size:20.5px;line-height:29px;font-weight:700;color:#000;letter-spacing:-0.5px">internos;</div><svg width="16" height="16" style="left:260.0px;top:182.2px"><circle cx="8" cy="8" r="6.2" fill="none" stroke="#000" stroke-width="3.5"/></svg><div class="sl" style="left:285.0px;top:175.6px;font-size:20.5px;line-height:29px;font-weight:700;color:#000;letter-spacing:-0.5px">Organização do SMI: dois</div><div class="sl" style="left:285.0px;top:203.8px;font-size:20.5px;line-height:29px;font-weight:700;color:#000;letter-spacing:-0.5px">enfermeiros gestores</div><svg width="16" height="16" style="left:260.0px;top:238.6px"><circle cx="8" cy="8" r="6.2" fill="none" stroke="#000" stroke-width="3.5"/></svg><div class="sl" style="left:285.0px;top:232.0px;font-size:20.5px;line-height:29px;font-weight:700;color:#000;letter-spacing:-0.5px">Concursos de especialistas</div><div class="sl" style="left:285.0px;top:260.2px;font-size:20.5px;line-height:29px;font-weight:700;color:#000;letter-spacing:-0.5px">(progressão);</div><svg width="16" height="16" style="left:260.0px;top:295.0px"><circle cx="8" cy="8" r="6.2" fill="none" stroke="#000" stroke-width="3.5"/></svg><div class="sl" style="left:285.0px;top:288.4px;font-size:20.5px;line-height:29px;font-weight:700;color:#000;letter-spacing:-0.5px">Distribuição inadequada dos</div><div class="sl" style="left:285.0px;top:316.6px;font-size:20.5px;line-height:29px;font-weight:700;color:#000;letter-spacing:-0.5px">EEER por serviço;</div><svg width="16" height="16" style="left:597.0px;top:98.9px"><circle cx="8" cy="8" r="6.2" fill="none" stroke="#000" stroke-width="3.5"/></svg><div class="sl" style="left:622.0px;top:92.3px;font-size:20.5px;line-height:29px;font-weight:700;color:#000;letter-spacing:-0.5px">Gestão ineficaz de EEER;</div><svg width="16" height="16" style="left:597.0px;top:127.1px"><circle cx="8" cy="8" r="6.2" fill="none" stroke="#000" stroke-width="3.5"/></svg><div class="sl" style="left:622.0px;top:120.5px;font-size:20.5px;line-height:29px;font-weight:700;color:#000;letter-spacing:-0.5px">RH desajustados;</div><svg width="16" height="16" style="left:597.0px;top:155.4px"><circle cx="8" cy="8" r="6.2" fill="none" stroke="#000" stroke-width="3.5"/></svg><div class="sl" style="left:622.0px;top:148.8px;font-size:20.5px;line-height:29px;font-weight:700;color:#000;letter-spacing:-0.5px">Carga excessiva de trabalho</div><div class="sl" style="left:622.0px;top:177.0px;font-size:20.5px;line-height:29px;font-weight:700;color:#000;letter-spacing:-0.5px">extraordinário;</div><svg width="16" height="16" style="left:597.0px;top:211.9px"><circle cx="8" cy="8" r="6.2" fill="none" stroke="#000" stroke-width="3.5"/></svg><div class="sl" style="left:622.0px;top:205.3px;font-size:20.5px;line-height:29px;font-weight:700;color:#000;letter-spacing:-0.5px">Exaustão dos profissionais;</div><svg width="16" height="16" style="left:597.0px;top:240.1px"><circle cx="8" cy="8" r="6.2" fill="none" stroke="#000" stroke-width="3.5"/></svg><div class="sl" style="left:622.0px;top:233.5px;font-size:20.5px;line-height:29px;font-weight:700;color:#000;letter-spacing:-0.5px">EEER não dedicados apenas à</div><div class="sl" style="left:622.0px;top:261.8px;font-size:20.5px;line-height:29px;font-weight:700;color:#000;letter-spacing:-0.5px">Reabilitação dos doentes;</div><svg width="16" height="16" style="left:1002.5px;top:98.8px"><circle cx="8" cy="8" r="6.2" fill="none" stroke="#000" stroke-width="3.5"/></svg><div class="sl" style="left:1027.5px;top:92.2px;font-size:20.5px;line-height:29px;font-weight:700;color:#000;letter-spacing:-0.5px">Comunicação ineficaz</div><div class="sl" style="left:1027.5px;top:120.4px;font-size:20.5px;line-height:29px;font-weight:700;color:#000;letter-spacing:-0.5px">na equipa</div><div class="sl" style="left:1027.5px;top:148.7px;font-size:20.5px;line-height:29px;font-weight:700;color:#000;letter-spacing:-0.5px">multidisciplinar;</div><svg width="16" height="16" style="left:1002.5px;top:183.5px"><circle cx="8" cy="8" r="6.2" fill="none" stroke="#000" stroke-width="3.5"/></svg><div class="sl" style="left:1027.5px;top:176.9px;font-size:20.5px;line-height:29px;font-weight:700;color:#000;letter-spacing:-0.5px">Ausência de</div><div class="sl" style="left:1027.5px;top:205.2px;font-size:20.5px;line-height:29px;font-weight:700;color:#000;letter-spacing:-0.5px">continuidade de</div><div class="sl" style="left:1027.5px;top:233.4px;font-size:20.5px;line-height:29px;font-weight:700;color:#000;letter-spacing:-0.5px">cuidados diferenciados;</div><svg width="16" height="16" style="left:267.0px;top:797.5px"><circle cx="8" cy="8" r="6.2" fill="none" stroke="#000" stroke-width="3.5"/></svg><div class="sl" style="left:292.0px;top:790.9px;font-size:20.5px;line-height:29px;font-weight:700;color:#000;letter-spacing:-0.5px">Falta de investimento</div><div class="sl" style="left:292.0px;top:819.2px;font-size:20.5px;line-height:29px;font-weight:700;color:#000;letter-spacing:-0.5px">pessoal/profissional;</div><svg width="16" height="16" style="left:267.0px;top:854.1px"><circle cx="8" cy="8" r="6.2" fill="none" stroke="#000" stroke-width="3.5"/></svg><div class="sl" style="left:292.0px;top:847.5px;font-size:20.5px;line-height:29px;font-weight:700;color:#000;letter-spacing:-0.5px">Desmotivação</div><div class="sl" style="left:292.0px;top:875.8px;font-size:20.5px;line-height:29px;font-weight:700;color:#000;letter-spacing:-0.5px">associado à falta de</div><div class="sl" style="left:292.0px;top:904.1px;font-size:20.5px;line-height:29px;font-weight:700;color:#000;letter-spacing:-0.5px">valorização</div><div class="sl" style="left:292.0px;top:932.4px;font-size:20.5px;line-height:29px;font-weight:700;color:#000;letter-spacing:-0.5px">profissional da classe</div><div class="sl" style="left:292.0px;top:960.7px;font-size:20.5px;line-height:29px;font-weight:700;color:#000;letter-spacing:-0.5px">de Enfermagem;</div><svg width="16" height="16" style="left:596.5px;top:815.8px"><circle cx="8" cy="8" r="6.2" fill="none" stroke="#000" stroke-width="3.5"/></svg><div class="sl" style="left:621.5px;top:809.2px;font-size:20.5px;line-height:29px;font-weight:700;color:#000;letter-spacing:-0.5px">Falta de material</div><div class="sl" style="left:621.5px;top:837.3px;font-size:20.5px;line-height:29px;font-weight:700;color:#000;letter-spacing:-0.5px">específico para</div><div class="sl" style="left:621.5px;top:865.5px;font-size:20.5px;line-height:29px;font-weight:700;color:#000;letter-spacing:-0.5px">reabilitação;</div><svg width="16" height="16" style="left:596.5px;top:900.2px"><circle cx="8" cy="8" r="6.2" fill="none" stroke="#000" stroke-width="3.5"/></svg><div class="sl" style="left:621.5px;top:893.6px;font-size:20.5px;line-height:29px;font-weight:700;color:#000;letter-spacing:-0.5px">Produtos de apoio;</div><svg width="16" height="16" style="left:1026.5px;top:806.0px"><circle cx="8" cy="8" r="6.2" fill="none" stroke="#000" stroke-width="3.5"/></svg><div class="sl" style="left:1051.5px;top:799.4px;font-size:20.5px;line-height:29px;font-weight:700;color:#000;letter-spacing:-0.5px">Complexidade do doente crítico;</div><svg width="16" height="16" style="left:1026.5px;top:834.2px"><circle cx="8" cy="8" r="6.2" fill="none" stroke="#000" stroke-width="3.5"/></svg><div class="sl" style="left:1051.5px;top:827.6px;font-size:20.5px;line-height:29px;font-weight:700;color:#000;letter-spacing:-0.5px">Tempo de internamento mais</div><div class="sl" style="left:1051.5px;top:855.8px;font-size:20.5px;line-height:29px;font-weight:700;color:#000;letter-spacing:-0.5px">prolongado associado a</div><div class="sl" style="left:1051.5px;top:884.0px;font-size:20.5px;line-height:29px;font-weight:700;color:#000;letter-spacing:-0.5px">comorbilidades futuras;</div><div class="sl" style="left:1017.0px;width:400px;text-align:center;top:486.6px;font-size:22px;line-height:31px;font-weight:700;color:#000;letter-spacing:0.75px">Inexistência de</div><div class="sl" style="left:1017.0px;width:400px;text-align:center;top:514.1px;font-size:22px;line-height:31px;font-weight:700;color:#000;letter-spacing:0.75px">equidade no</div><div class="sl" style="left:1017.0px;width:400px;text-align:center;top:541.6px;font-size:22px;line-height:31px;font-weight:700;color:#000;letter-spacing:0.75px">acesso a Cuidados</div><div class="sl" style="left:1017.0px;width:400px;text-align:center;top:569.2px;font-size:22px;line-height:31px;font-weight:700;color:#000;letter-spacing:0.75px">de Enfermagem de</div><div class="sl" style="left:1017.0px;width:400px;text-align:center;top:596.7px;font-size:22px;line-height:31px;font-weight:700;color:#000;letter-spacing:0.75px">Reabilitação a</div><div class="sl" style="left:1017.0px;width:400px;text-align:center;top:624.2px;font-size:22px;line-height:31px;font-weight:700;color:#000;letter-spacing:0.75px">todos os utentes</div><div class="sl" style="left:1017.0px;width:400px;text-align:center;top:651.8px;font-size:22px;line-height:31px;font-weight:700;color:#000;letter-spacing:0.75px">internados no SMI</div></div>
<div class="abs" style="left:703px;top:184px;width:1553px;height:1166px;border:1px solid #c6c6c6;background:#fff"></div>
<div class="slide" style="left:704px;top:185px"><svg width="1551" height="1164" style="left:0;top:0"><path d="M154.8,427.0 C164.8,429.6 197.3,436.7 214.6,442.6 C231.9,448.5 245.2,455.2 258.8,462.6 C272.4,470.0 284.6,479.1 296.0,487.0 C307.4,494.9 314.5,504.3 327.0,510.0 C339.5,515.7 356.2,519.0 371.0,521.0 C385.8,523.0 395.2,522.6 416.0,522.0 C436.8,521.4 466.0,522.8 496.0,517.5 C526.0,512.2 569.5,502.6 596.0,490.0 C622.5,477.4 645.2,450.0 655.0,442.0 C650.2,437.5 640.8,422.0 626.0,415.0 C611.2,408.0 576.0,402.5 566.0,400.0 C581.7,388.7 636.5,351.5 660.0,332.0 C683.5,312.5 692.0,295.3 707.0,283.0 C722.0,270.7 737.0,257.5 750.0,258.0 C763.0,258.5 770.0,273.2 785.0,286.0 C800.0,298.8 821.8,320.2 840.0,335.0 C858.2,349.8 872.5,365.4 894.0,375.0 C915.5,384.6 942.9,388.1 968.9,392.9 C994.9,397.7 1024.5,399.2 1050.0,403.6 C1075.5,408.0 1100.2,412.8 1121.7,419.0 C1143.2,425.2 1156.6,431.4 1179.0,440.7 C1201.4,450.0 1229.7,462.0 1256.0,475.0 C1282.3,488.0 1319.2,509.0 1337.0,519.0 C1354.8,529.0 1354.0,529.0 1363.0,535.0 C1372.0,541.0 1383.8,549.2 1391.0,555.0 C1398.2,560.8 1402.6,564.4 1406.0,570.0 C1409.4,575.6 1411.4,582.5 1411.4,588.7 C1411.4,594.9 1409.4,601.1 1406.0,607.0 C1402.6,612.9 1398.2,618.4 1391.0,624.0 C1383.8,629.6 1372.0,635.4 1363.0,640.7 C1354.0,646.0 1354.8,646.1 1337.0,656.0 C1319.2,665.9 1284.5,686.8 1256.0,700.0 C1227.5,713.2 1192.7,726.2 1166.0,735.0 C1139.3,743.8 1125.7,745.7 1096.0,753.0 C1066.3,760.3 1025.5,773.8 988.0,779.0 C950.5,784.2 890.5,783.2 871.0,784.0 L864.6,784.7 C863.7,789.2 863.8,799.8 859.0,812.0 C854.2,824.2 846.0,842.7 836.0,858.0 C826.0,873.3 805.2,896.0 799.0,903.6 C793.7,901.3 776.1,893.6 767.0,890.0 C757.9,886.4 756.6,885.8 744.6,882.0 C732.6,878.2 703.3,869.5 695.0,867.0 C695.7,861.7 696.5,846.0 699.0,835.0 C701.5,824.0 706.2,811.2 710.0,800.7 C713.8,790.2 719.8,776.8 721.7,772.0 C701.7,768.9 632.5,759.8 601.5,753.4 C570.5,747.0 553.6,737.2 536.0,733.5 C518.4,729.8 520.3,733.1 496.0,731.0 C471.7,728.9 416.9,728.2 390.0,721.0 C363.1,713.8 343.8,693.5 334.6,688.0 C339.8,682.5 356.3,663.7 366.0,655.0 C375.7,646.3 388.5,639.2 393.0,636.0 C382.5,639.7 346.2,653.0 330.0,658.0 C313.8,663.0 307.9,662.8 296.0,666.0 C284.1,669.2 276.1,673.2 258.8,677.3 C241.5,681.4 212.3,686.5 192.4,690.6 C172.5,694.7 148.1,699.9 139.3,701.7 C146.2,693.9 169.2,669.5 181.0,655.0 C192.8,640.5 203.1,627.9 210.0,615.0 C216.9,602.1 220.2,583.9 222.3,577.7 C221.0,572.9 219.6,560.5 214.6,549.0 C209.6,537.5 199.8,523.8 192.4,509.0 C185.0,494.2 176.3,473.7 170.0,460.0 C163.7,446.3 157.3,432.5 154.8,427.0 Z" fill="#e8ebf0"/><path d="M278,588.5 L1098,585.5" stroke="#6cb6e6" stroke-width="1.2" fill="none"/><path d="M249.0,131.0 L249.0,432.0" stroke="#e9573f" stroke-width="1.25" fill="none"/><path d="M316.0,465.0 L517.0,579.0" stroke="#e9573f" stroke-width="1.25" fill="none"/><path d="M517.0,595.0 L316.0,757.0" stroke="#e9573f" stroke-width="1.25" fill="none"/><path d="M249.0,791.0 L249.0,996.0" stroke="#e9573f" stroke-width="1.25" fill="none"/><path d="M581.0,107.0 L581.0,368.0" stroke="#29abe2" stroke-width="1.25" fill="none"/><path d="M657.0,402.0 L791.0,571.0" stroke="#29abe2" stroke-width="1.25" fill="none"/><path d="M791.0,601.0 L662.0,743.0" stroke="#29abe2" stroke-width="1.25" fill="none"/><path d="M581.0,776.0 L581.0,971.0" stroke="#29abe2" stroke-width="1.25" fill="none"/><path d="M992.0,143.0 L992.0,337.0" stroke="#23a183" stroke-width="1.25" fill="none"/><path d="M956.0,393.0 L1037.0,572.0" stroke="#23a183" stroke-width="1.25" fill="none"/><path d="M1037.0,602.0 L972.0,758.0" stroke="#23a183" stroke-width="1.25" fill="none"/><path d="M1013.0,794.0 L1010.5,975.0" stroke="#23a183" stroke-width="1.25" fill="none"/><ellipse cx="525" cy="586.7" rx="10.8" ry="20" fill="#e9573f"/><ellipse cx="797" cy="586.7" rx="10.8" ry="20" fill="#29abe2"/><ellipse cx="1039" cy="586.7" rx="10.8" ry="20" fill="#23a183"/><ellipse cx="315" cy="432" rx="66" ry="33.5" fill="#e9573f"/><ellipse cx="647" cy="368" rx="66" ry="33.5" fill="#29abe2"/><ellipse cx="948" cy="359" rx="66" ry="33.5" fill="#23a183"/><ellipse cx="315" cy="791" rx="66" ry="33.5" fill="#e9573f"/><ellipse cx="647" cy="776" rx="66" ry="33.5" fill="#29abe2"/><ellipse cx="948" cy="791" rx="66" ry="33.5" fill="#23a183"/><rect x="1096.5" y="439.5" width="242" height="293" fill="#fff"/><rect x="1098" y="441" width="239" height="290" fill="#71bdea"/></svg><div class="sl" style="left:115.0px;width:400px;text-align:center;top:410.4px;font-size:16px;line-height:22px;font-weight:700;color:#fff;letter-spacing:0.45px">Contexto</div><div class="sl" style="left:115.0px;width:400px;text-align:center;top:430.1px;font-size:16px;line-height:22px;font-weight:700;color:#fff;letter-spacing:0.45px">Institucional</div><div class="sl" style="left:447.0px;width:400px;text-align:center;top:346.3px;font-size:16px;line-height:22px;font-weight:700;color:#fff;letter-spacing:0.45px">Recursos</div><div class="sl" style="left:447.0px;width:400px;text-align:center;top:366.2px;font-size:16px;line-height:22px;font-weight:700;color:#fff;letter-spacing:0.45px">Humanos</div><div class="sl" style="left:748.0px;width:400px;text-align:center;top:347.8px;font-size:16px;line-height:22px;font-weight:700;color:#fff;letter-spacing:0.45px">Comunicação</div><div class="sl" style="left:115.0px;width:400px;text-align:center;top:778.3px;font-size:16px;line-height:22px;font-weight:700;color:#fff;letter-spacing:0.45px">Formação</div><div class="sl" style="left:447.0px;width:400px;text-align:center;top:765.0px;font-size:16px;line-height:22px;font-weight:700;color:#fff;letter-spacing:0.45px">Equipamentos</div><div class="sl" style="left:748.0px;width:400px;text-align:center;top:779.1px;font-size:16px;line-height:22px;font-weight:700;color:#fff;letter-spacing:0.45px">Utente</div><svg width="16" height="16" style="left:260.0px;top:125.8px"><circle cx="8" cy="8" r="6.2" fill="none" stroke="#000" stroke-width="2"/></svg><div class="sl" style="left:285.0px;top:119.2px;font-size:20.5px;line-height:29px;font-weight:400;color:#000;letter-spacing:0.3px">Políticas e procedimentos</div><div class="sl" style="left:285.0px;top:147.4px;font-size:20.5px;line-height:29px;font-weight:400;color:#000;letter-spacing:0.3px">internos;</div><svg width="16" height="16" style="left:260.0px;top:182.2px"><circle cx="8" cy="8" r="6.2" fill="none" stroke="#000" stroke-width="2"/></svg><div class="sl" style="left:285.0px;top:175.6px;font-size:20.5px;line-height:29px;font-weight:400;color:#000;letter-spacing:0.3px">Organização do SMI: dois</div><div class="sl" style="left:285.0px;top:203.8px;font-size:20.5px;line-height:29px;font-weight:400;color:#000;letter-spacing:0.3px">enfermeiros gestores</div><svg width="16" height="16" style="left:260.0px;top:238.6px"><circle cx="8" cy="8" r="6.2" fill="none" stroke="#000" stroke-width="2"/></svg><div class="sl" style="left:285.0px;top:232.0px;font-size:20.5px;line-height:29px;font-weight:400;color:#000;letter-spacing:0.3px">Concursos de especialistas</div><div class="sl" style="left:285.0px;top:260.2px;font-size:20.5px;line-height:29px;font-weight:400;color:#000;letter-spacing:0.3px">(progressão);</div><svg width="16" height="16" style="left:260.0px;top:295.0px"><circle cx="8" cy="8" r="6.2" fill="none" stroke="#000" stroke-width="2"/></svg><div class="sl" style="left:285.0px;top:288.4px;font-size:20.5px;line-height:29px;font-weight:400;color:#000;letter-spacing:0.3px">Distribuição inadequada dos</div><div class="sl" style="left:285.0px;top:316.6px;font-size:20.5px;line-height:29px;font-weight:400;color:#000;letter-spacing:0.3px">EEER por serviço;</div><svg width="16" height="16" style="left:597.0px;top:98.9px"><circle cx="8" cy="8" r="6.2" fill="none" stroke="#000" stroke-width="2"/></svg><div class="sl" style="left:622.0px;top:92.3px;font-size:20.5px;line-height:29px;font-weight:400;color:#000;letter-spacing:0.3px">Gestão ineficaz de EEER;</div><svg width="16" height="16" style="left:597.0px;top:127.1px"><circle cx="8" cy="8" r="6.2" fill="none" stroke="#000" stroke-width="2"/></svg><div class="sl" style="left:622.0px;top:120.5px;font-size:20.5px;line-height:29px;font-weight:400;color:#000;letter-spacing:0.3px">RH desajustados;</div><svg width="16" height="16" style="left:597.0px;top:155.4px"><circle cx="8" cy="8" r="6.2" fill="none" stroke="#000" stroke-width="2"/></svg><div class="sl" style="left:622.0px;top:148.8px;font-size:20.5px;line-height:29px;font-weight:400;color:#000;letter-spacing:0.3px">Carga excessiva de trabalho</div><div class="sl" style="left:622.0px;top:177.0px;font-size:20.5px;line-height:29px;font-weight:400;color:#000;letter-spacing:0.3px">extraordinário;</div><svg width="16" height="16" style="left:597.0px;top:211.9px"><circle cx="8" cy="8" r="6.2" fill="none" stroke="#000" stroke-width="2"/></svg><div class="sl" style="left:622.0px;top:205.3px;font-size:20.5px;line-height:29px;font-weight:400;color:#000;letter-spacing:0.3px">Exaustão dos profissionais;</div><svg width="16" height="16" style="left:597.0px;top:240.1px"><circle cx="8" cy="8" r="6.2" fill="none" stroke="#000" stroke-width="2"/></svg><div class="sl" style="left:622.0px;top:233.5px;font-size:20.5px;line-height:29px;font-weight:400;color:#000;letter-spacing:0.3px">EEER não dedicados apenas à</div><div class="sl" style="left:622.0px;top:261.8px;font-size:20.5px;line-height:29px;font-weight:400;color:#000;letter-spacing:0.3px">Reabilitação dos doentes;</div><svg width="16" height="16" style="left:1002.5px;top:98.8px"><circle cx="8" cy="8" r="6.2" fill="none" stroke="#000" stroke-width="2"/></svg><div class="sl" style="left:1027.5px;top:92.2px;font-size:20.5px;line-height:29px;font-weight:400;color:#000;letter-spacing:0.3px">Comunicação ineficaz</div><div class="sl" style="left:1027.5px;top:120.4px;font-size:20.5px;line-height:29px;font-weight:400;color:#000;letter-spacing:0.3px">na equipa</div><div class="sl" style="left:1027.5px;top:148.7px;font-size:20.5px;line-height:29px;font-weight:400;color:#000;letter-spacing:0.3px">multidisciplinar;</div><svg width="16" height="16" style="left:1002.5px;top:183.5px"><circle cx="8" cy="8" r="6.2" fill="none" stroke="#000" stroke-width="2"/></svg><div class="sl" style="left:1027.5px;top:176.9px;font-size:20.5px;line-height:29px;font-weight:400;color:#000;letter-spacing:0.3px">Ausência de</div><div class="sl" style="left:1027.5px;top:205.2px;font-size:20.5px;line-height:29px;font-weight:400;color:#000;letter-spacing:0.3px">continuidade de</div><div class="sl" style="left:1027.5px;top:233.4px;font-size:20.5px;line-height:29px;font-weight:400;color:#000;letter-spacing:0.3px">cuidados diferenciados;</div><svg width="16" height="16" style="left:267.0px;top:797.5px"><circle cx="8" cy="8" r="6.2" fill="none" stroke="#000" stroke-width="2"/></svg><div class="sl" style="left:292.0px;top:790.9px;font-size:20.5px;line-height:29px;font-weight:400;color:#000;letter-spacing:0.3px">Falta de investimento</div><div class="sl" style="left:292.0px;top:819.2px;font-size:20.5px;line-height:29px;font-weight:400;color:#000;letter-spacing:0.3px">pessoal/profissional;</div><svg width="16" height="16" style="left:267.0px;top:854.1px"><circle cx="8" cy="8" r="6.2" fill="none" stroke="#000" stroke-width="2"/></svg><div class="sl" style="left:292.0px;top:847.5px;font-size:20.5px;line-height:29px;font-weight:400;color:#000;letter-spacing:0.3px">Desmotivação</div><div class="sl" style="left:292.0px;top:875.8px;font-size:20.5px;line-height:29px;font-weight:400;color:#000;letter-spacing:0.3px">associado à falta de</div><div class="sl" style="left:292.0px;top:904.1px;font-size:20.5px;line-height:29px;font-weight:400;color:#000;letter-spacing:0.3px">valorização</div><div class="sl" style="left:292.0px;top:932.4px;font-size:20.5px;line-height:29px;font-weight:400;color:#000;letter-spacing:0.3px">profissional da classe</div><div class="sl" style="left:292.0px;top:960.7px;font-size:20.5px;line-height:29px;font-weight:400;color:#000;letter-spacing:0.3px">de Enfermagem;</div><svg width="16" height="16" style="left:596.5px;top:815.8px"><circle cx="8" cy="8" r="6.2" fill="none" stroke="#000" stroke-width="2"/></svg><div class="sl" style="left:621.5px;top:809.2px;font-size:20.5px;line-height:29px;font-weight:400;color:#000;letter-spacing:0.3px">Falta de material</div><div class="sl" style="left:621.5px;top:837.3px;font-size:20.5px;line-height:29px;font-weight:400;color:#000;letter-spacing:0.3px">específico para</div><div class="sl" style="left:621.5px;top:865.5px;font-size:20.5px;line-height:29px;font-weight:400;color:#000;letter-spacing:0.3px">reabilitação;</div><svg width="16" height="16" style="left:596.5px;top:900.2px"><circle cx="8" cy="8" r="6.2" fill="none" stroke="#000" stroke-width="2"/></svg><div class="sl" style="left:621.5px;top:893.6px;font-size:20.5px;line-height:29px;font-weight:400;color:#000;letter-spacing:0.3px">Produtos de apoio;</div><svg width="16" height="16" style="left:1026.5px;top:806.0px"><circle cx="8" cy="8" r="6.2" fill="none" stroke="#000" stroke-width="2"/></svg><div class="sl" style="left:1051.5px;top:799.4px;font-size:20.5px;line-height:29px;font-weight:400;color:#000;letter-spacing:0.3px">Complexidade do doente crítico;</div><svg width="16" height="16" style="left:1026.5px;top:834.2px"><circle cx="8" cy="8" r="6.2" fill="none" stroke="#000" stroke-width="2"/></svg><div class="sl" style="left:1051.5px;top:827.6px;font-size:20.5px;line-height:29px;font-weight:400;color:#000;letter-spacing:0.3px">Tempo de internamento mais</div><div class="sl" style="left:1051.5px;top:855.8px;font-size:20.5px;line-height:29px;font-weight:400;color:#000;letter-spacing:0.3px">prolongado associado a</div><div class="sl" style="left:1051.5px;top:884.0px;font-size:20.5px;line-height:29px;font-weight:400;color:#000;letter-spacing:0.3px">comorbilidades futuras;</div><div class="sl" style="left:1017.0px;width:400px;text-align:center;top:486.6px;font-size:22px;line-height:31px;font-weight:700;color:#000;letter-spacing:0.75px">Inexistência de</div><div class="sl" style="left:1017.0px;width:400px;text-align:center;top:514.1px;font-size:22px;line-height:31px;font-weight:700;color:#000;letter-spacing:0.75px">equidade no</div><div class="sl" style="left:1017.0px;width:400px;text-align:center;top:541.6px;font-size:22px;line-height:31px;font-weight:700;color:#000;letter-spacing:0.75px">acesso a Cuidados</div><div class="sl" style="left:1017.0px;width:400px;text-align:center;top:569.2px;font-size:22px;line-height:31px;font-weight:700;color:#000;letter-spacing:0.75px">de Enfermagem de</div><div class="sl" style="left:1017.0px;width:400px;text-align:center;top:596.7px;font-size:22px;line-height:31px;font-weight:700;color:#000;letter-spacing:0.75px">Reabilitação a</div><div class="sl" style="left:1017.0px;width:400px;text-align:center;top:624.2px;font-size:22px;line-height:31px;font-weight:700;color:#000;letter-spacing:0.75px">todos os utentes</div><div class="sl" style="left:1017.0px;width:400px;text-align:center;top:651.8px;font-size:22px;line-height:31px;font-weight:700;color:#000;letter-spacing:0.75px">internados no SMI</div></div>
<div class="abs" style="left:0;top:1377px;width:2560px;height:1px;background:#d2d0ce"></div>
<div class="abs" style="left:0;top:1378px;width:2560px;height:22px;background:#f3f2f1"></div>
<div class="st" style="left:8px;top:1382px">Slide 1 of 1</div>
<div class="st" style="left:97px;top:1382px">Chinese (China)</div>
<div class="abs" style="left:2196px;top:1378px;width:40px;height:22px;background:#d2d0ce"></div>
<svg width="560" height="22" style="left:2000px;top:1378px">
 <g fill="none" stroke="#444" stroke-width="1.1">
  <path d="M39 8.5 H55 M39 12.5 H55 M39 16.5 H55 M44 5 L47 2.5 L50 5"/>
  <path d="M106.5 4.5 H120.5 V13.5 H112 L108 17 V13.5 H106.5 Z"/>
  <path d="M209.5 4.5 H223.5 V16.5 H209.5 Z M212 4.5 V16.5 M214.5 7.5 H221 V11 H214.5 Z M212 14 H223.5"/>
  <path d="M248.5 4.5 H254 V9 H248.5 Z M257.5 4.5 H263 V9 H257.5 Z M248.5 12 H254 V16.5 H248.5 Z M257.5 12 H263 V16.5 H257.5 Z"/>
  <path d="M289 5 C292 4 294 4 295.5 5.5 C297 4 299 4 302 5 V16 C299 15 297 15 295.5 16.5 C294 15 292 15 289 16 Z M295.5 5.5 V16.5 M291 8 H294 M291 11 H294 M297 8 H300 M297 11 H300"/>
  <path d="M329 4.5 H341 M330 4.5 V11.5 H340 V4.5 M335 11.5 V17 M331 17 H339"/>
  <path d="M361.5 10.5 H369"/>
  <path d="M375.5 10.5 H475" stroke="#888" stroke-width="0.8"/>
  <path d="M425 7.5 V13.5" stroke="#888" stroke-width="0.8"/>
  <path d="M479 10.5 H488 M483.5 6 V15"/>
  <path d="M544 6 L541 10.5 L544 15 M551 6 L554 10.5 L551 15 M545 7 H550 V14 H545 Z M547.5 3 L546 4.5 M547.5 3 L549 4.5 M547.5 18 L546 16.5 M547.5 18 L549 16.5"/>
 </g>
 <rect x="433" y="6" width="5" height="10" fill="#666"/>
</svg>
<div class="st" style="left:2056px;top:1383px">Notes</div>
<div class="st" style="left:2123px;top:1383px">Comments</div>
<div class="st" style="left:2502px;top:1383px">162%</div>
</body></html>
